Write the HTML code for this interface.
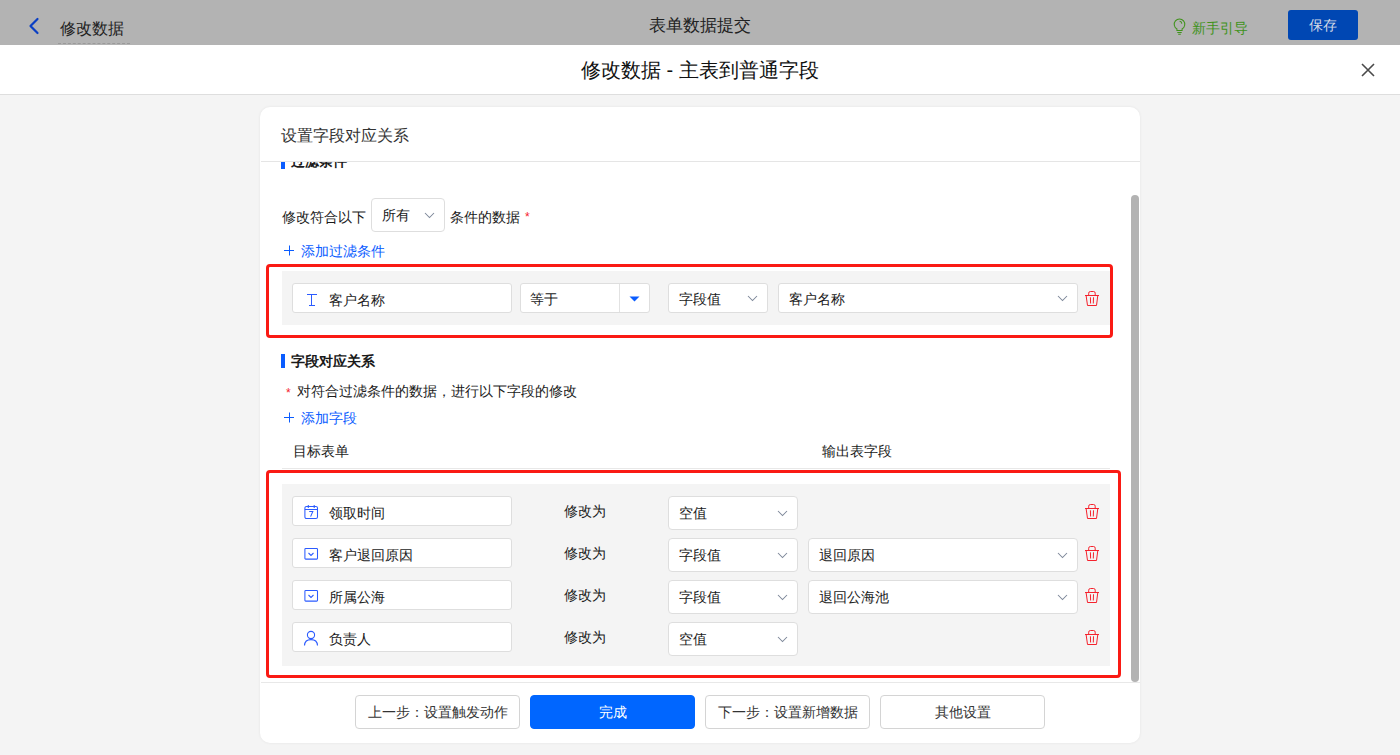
<!DOCTYPE html>
<html><head><meta charset="utf-8">
<style>
*{box-sizing:border-box;margin:0;padding:0}
html,body{width:1400px;height:755px;overflow:hidden;background:#f4f4f4;font-family:"Liberation Sans",sans-serif;color:#1a1a1a;font-size:14px}
.a{position:absolute;white-space:nowrap}
.inp{position:absolute;background:#fff;border:1px solid #dedede;border-radius:3px;height:30px}
.sel{position:absolute;background:#fff;border:1px solid #dedede;border-radius:4px;height:34px}
.txt{position:absolute;white-space:nowrap;line-height:16px;font-size:14px;color:#1a1a1a}
.red{position:absolute;border:3px solid #fa1a14;border-radius:4px}
.gray{position:absolute;background:#f4f4f4}
.btn{position:absolute;height:34px;width:165px;border:1px solid #d4d4d4;border-radius:4px;background:#fff;text-align:center;line-height:32px;font-size:14px;color:#333;white-space:nowrap}
.bar{position:absolute;width:4px;background:#0a5cff}
</style></head><body>
<div class="a" style="left:0;top:0;width:1400px;height:45px;background:#b3b3b3"></div>
<svg class="a" style="left:27px;top:17px" width="14" height="18" viewBox="0 0 14 18"><path d="M10.5 2 L3.5 9 L10.5 16" fill="none" stroke="#0a3fc4" stroke-width="2.2" stroke-linecap="round" stroke-linejoin="round"/></svg>
<div class="txt" style="left:60px;top:20px;font-size:16px;line-height:18px;color:#222">修改数据</div>
<div class="a" style="left:58px;top:43px;width:72px;height:1px;border-top:1px dashed #9a9a9a"></div>
<div class="txt" style="left:649px;top:16px;font-size:17px;line-height:19px;color:#222">表单数据提交</div>
<svg class="a" style="left:1173px;top:18px" width="13" height="17" viewBox="0 0 13 17"><path d="M3.9 12.5V10.9A5.3 5.3 0 1 1 9.1 10.9V12.5H3.9Z M4.3 14.5H8.7 M5.2 16.3H7.8 M6.6 3.3A2.6 2.6 0 0 1 8.8 5.6" fill="none" stroke="#3f921a" stroke-width="1.05"/></svg>
<div class="txt" style="left:1192px;top:19.5px;color:#3f921a">新手引导</div>
<div class="a" style="left:1288px;top:10px;width:70px;height:30px;background:#0047b3;border-radius:3px;color:#d4dae6;text-align:center;line-height:30px;font-size:14px">保存</div>
<div class="a" style="left:0;top:45px;width:1400px;height:50px;background:#fff;border-bottom:1px solid #dedede"></div>
<div class="txt" style="left:581px;top:59px;font-size:20px;line-height:22px;color:#111">修改数据 - 主表到普通字段</div>
<svg class="a" style="left:1360px;top:62px" width="16" height="16" viewBox="0 0 16 16"><path d="M2 2L14 14M14 2L2 14" stroke="#4a4a4a" stroke-width="1.6"/></svg>
<div class="a" style="left:260px;top:107px;width:880px;height:636px;background:#fff;border-radius:10px;box-shadow:0 0 3px rgba(0,0,0,0.07)"></div>
<div class="txt" style="left:281px;top:127px;font-size:16px;line-height:18px;color:#333">设置字段对应关系</div>
<div class="a" style="left:261px;top:161px;width:879px;height:1px;background:#e5e5e5"></div>
<div class="a" style="left:260px;top:162px;width:880px;height:520px;overflow:hidden">
<div style="position:absolute;left:-260px;top:-162px;width:1400px;height:755px">
<div class="bar" style="left:281px;top:155px;height:14px"></div>
<div class="txt" style="left:291px;top:153px;font-weight:bold">过滤条件</div>
<div class="txt" style="left:282px;top:209px">修改符合以下</div>
<div class="sel" style="left:371px;top:198px;width:74px;height:34px"></div>
<div class="txt" style="left:382px;top:207px">所有</div>
<svg class="a" style="left:424px;top:212px" width="11" height="7" viewBox="0 0 11 7"><path d="M1 1L5.5 5.5L10 1" fill="none" stroke="#7d8799" stroke-width="1.05"/></svg>
<div class="txt" style="left:450px;top:209px">条件的数据</div>
<div class="txt" style="left:525px;top:209px;color:#f5222d;font-size:12px">*</div>
<svg class="a" style="left:284px;top:245px" width="11" height="11" viewBox="0 0 11 11"><path d="M0 5.5H10M5.5 0.5V10.5" fill="none" stroke="#0a5cff" stroke-width="1"/></svg>
<div class="txt" style="left:301px;top:243px;color:#0a5cff">添加过滤条件</div>
<div class="red" style="left:266px;top:264px;width:847px;height:74px"></div>
<div class="gray" style="left:282px;top:271px;width:828px;height:54px"></div>
<div class="inp" style="left:292px;top:283px;width:220px"></div>
<svg class="a" style="left:305px;top:292px" width="14" height="16" viewBox="0 0 14 16"><path d="M2 2.5H12M6.5 2.5V13M4 13.5H10" fill="none" stroke="#2b5bff" stroke-width="1"/></svg>
<div class="txt" style="left:329px;top:292px">客户名称</div>
<div class="inp" style="left:520px;top:283px;width:130px"></div>
<div class="a" style="left:619px;top:284px;width:1px;height:28px;background:#e2e2e2"></div>
<svg class="a" style="left:629px;top:296px" width="11" height="6" viewBox="0 0 11 6"><path d="M0.5 0.5H10.5L5.5 5.5Z" fill="#0a5cff"/></svg>
<div class="txt" style="left:530px;top:291px">等于</div>
<div class="inp" style="left:668px;top:283px;width:100px"></div>
<div class="txt" style="left:679px;top:291px">字段值</div>
<svg class="a" style="left:747px;top:295px" width="11" height="7" viewBox="0 0 11 7"><path d="M1 1L5.5 5.5L10 1" fill="none" stroke="#7d8799" stroke-width="1.05"/></svg>
<div class="inp" style="left:778px;top:283px;width:300px"></div>
<div class="txt" style="left:789px;top:291px">客户名称</div>
<svg class="a" style="left:1057px;top:295px" width="11" height="7" viewBox="0 0 11 7"><path d="M1 1L5.5 5.5L10 1" fill="none" stroke="#7d8799" stroke-width="1.05"/></svg>
<svg class="a" style="left:1085px;top:291px" width="15" height="16" viewBox="0 0 15 16"><path d="M0 4.5H14M3.7 4.5V2.2Q3.7 0.5 5.4 0.5H8.6Q10.2 0.5 10.2 2.2V4.5M1.1 4.5L2.5 14.5H11.5L12.8 4.5M5.4 6.3L5.6 12.5M8.5 6.3L8.3 12.5" fill="none" stroke="#f5222d" stroke-width="1"/></svg>
<div class="bar" style="left:281px;top:354px;height:14px"></div>
<div class="txt" style="left:291px;top:353px;font-weight:bold">字段对应关系</div>
<div class="txt" style="left:286px;top:385px;color:#f5222d;font-size:12px">*</div>
<div class="txt" style="left:297px;top:383px">对符合过滤条件的数据，进行以下字段的修改</div>
<svg class="a" style="left:284px;top:412px" width="11" height="11" viewBox="0 0 11 11"><path d="M0 5.5H10M5.5 0.5V10.5" fill="none" stroke="#0a5cff" stroke-width="1"/></svg>
<div class="txt" style="left:301px;top:410px;color:#0a5cff">添加字段</div>
<div class="txt" style="left:293px;top:443px">目标表单</div>
<div class="txt" style="left:822px;top:443px">输出表字段</div>
<div class="a" style="left:282px;top:468px;width:828px;height:1px;background:#e8e8e8"></div>
<div class="red" style="left:266px;top:470px;width:855px;height:208px"></div>
<div class="gray" style="left:282px;top:484px;width:828px;height:182px"></div>

<div class="inp" style="left:292px;top:496px;width:220px"></div>
<svg class="a" style="left:303px;top:504px" width="17" height="16" viewBox="0 0 17 16"><rect x="1.9" y="2.5" width="12.6" height="12" rx="1.6" fill="none" stroke="#2b5bff" stroke-width="1.05"/><path d="M1.9 5.5H14.5M5.3 1V4M11.2 1V4M6.2 7.4H9.8L7.6 12.6" fill="none" stroke="#2b5bff" stroke-width="1.05"/></svg>
<div class="txt" style="left:329px;top:505px">领取时间</div>
<div class="txt" style="left:564px;top:503px">修改为</div>
<div class="sel" style="left:668px;top:496px;width:130px"></div>
<div class="txt" style="left:679px;top:505px">空值</div>
<svg class="a" style="left:777px;top:510px" width="11" height="7" viewBox="0 0 11 7"><path d="M1 1L5.5 5.5L10 1" fill="none" stroke="#7d8799" stroke-width="1.05"/></svg>
<svg class="a" style="left:1085px;top:504px" width="15" height="16" viewBox="0 0 15 16"><path d="M0 4.5H14M3.7 4.5V2.2Q3.7 0.5 5.4 0.5H8.6Q10.2 0.5 10.2 2.2V4.5M1.1 4.5L2.5 14.5H11.5L12.8 4.5M5.4 6.3L5.6 12.5M8.5 6.3L8.3 12.5" fill="none" stroke="#f5222d" stroke-width="1"/></svg>
<div class="inp" style="left:292px;top:538px;width:220px"></div>
<svg class="a" style="left:303px;top:546px" width="17" height="16" viewBox="0 0 17 16"><rect x="1.9" y="2.5" width="12.6" height="10.6" rx="0.8" fill="none" stroke="#2b5bff" stroke-width="1.05"/><path d="M5.5 7L8 9.4L10.5 7" fill="none" stroke="#2b5bff" stroke-width="1.05"/></svg>
<div class="txt" style="left:329px;top:547px">客户退回原因</div>
<div class="txt" style="left:564px;top:545px">修改为</div>
<div class="sel" style="left:668px;top:538px;width:130px"></div>
<div class="txt" style="left:679px;top:547px">字段值</div>
<svg class="a" style="left:777px;top:552px" width="11" height="7" viewBox="0 0 11 7"><path d="M1 1L5.5 5.5L10 1" fill="none" stroke="#7d8799" stroke-width="1.05"/></svg>
<div class="sel" style="left:808px;top:538px;width:270px"></div>
<div class="txt" style="left:819px;top:547px">退回原因</div>
<svg class="a" style="left:1057px;top:552px" width="11" height="7" viewBox="0 0 11 7"><path d="M1 1L5.5 5.5L10 1" fill="none" stroke="#7d8799" stroke-width="1.05"/></svg>
<svg class="a" style="left:1085px;top:546px" width="15" height="16" viewBox="0 0 15 16"><path d="M0 4.5H14M3.7 4.5V2.2Q3.7 0.5 5.4 0.5H8.6Q10.2 0.5 10.2 2.2V4.5M1.1 4.5L2.5 14.5H11.5L12.8 4.5M5.4 6.3L5.6 12.5M8.5 6.3L8.3 12.5" fill="none" stroke="#f5222d" stroke-width="1"/></svg>
<div class="inp" style="left:292px;top:580px;width:220px"></div>
<svg class="a" style="left:303px;top:588px" width="17" height="16" viewBox="0 0 17 16"><rect x="1.9" y="2.5" width="12.6" height="10.6" rx="0.8" fill="none" stroke="#2b5bff" stroke-width="1.05"/><path d="M5.5 7L8 9.4L10.5 7" fill="none" stroke="#2b5bff" stroke-width="1.05"/></svg>
<div class="txt" style="left:329px;top:589px">所属公海</div>
<div class="txt" style="left:564px;top:587px">修改为</div>
<div class="sel" style="left:668px;top:580px;width:130px"></div>
<div class="txt" style="left:679px;top:589px">字段值</div>
<svg class="a" style="left:777px;top:594px" width="11" height="7" viewBox="0 0 11 7"><path d="M1 1L5.5 5.5L10 1" fill="none" stroke="#7d8799" stroke-width="1.05"/></svg>
<div class="sel" style="left:808px;top:580px;width:270px"></div>
<div class="txt" style="left:819px;top:589px">退回公海池</div>
<svg class="a" style="left:1057px;top:594px" width="11" height="7" viewBox="0 0 11 7"><path d="M1 1L5.5 5.5L10 1" fill="none" stroke="#7d8799" stroke-width="1.05"/></svg>
<svg class="a" style="left:1085px;top:588px" width="15" height="16" viewBox="0 0 15 16"><path d="M0 4.5H14M3.7 4.5V2.2Q3.7 0.5 5.4 0.5H8.6Q10.2 0.5 10.2 2.2V4.5M1.1 4.5L2.5 14.5H11.5L12.8 4.5M5.4 6.3L5.6 12.5M8.5 6.3L8.3 12.5" fill="none" stroke="#f5222d" stroke-width="1"/></svg>
<div class="inp" style="left:292px;top:622px;width:220px"></div>
<svg class="a" style="left:303px;top:630px" width="16" height="16" viewBox="0 0 16 16"><circle cx="8" cy="5" r="3.6" fill="none" stroke="#2b5bff" stroke-width="1.1"/><path d="M1.5 15.5Q1.8 9.6 8 9.6Q14.2 9.6 14.5 15.5" fill="none" stroke="#2b5bff" stroke-width="1.1"/></svg>
<div class="txt" style="left:329px;top:631px">负责人</div>
<div class="txt" style="left:564px;top:629px">修改为</div>
<div class="sel" style="left:668px;top:622px;width:130px"></div>
<div class="txt" style="left:679px;top:631px">空值</div>
<svg class="a" style="left:777px;top:636px" width="11" height="7" viewBox="0 0 11 7"><path d="M1 1L5.5 5.5L10 1" fill="none" stroke="#7d8799" stroke-width="1.05"/></svg>
<svg class="a" style="left:1085px;top:630px" width="15" height="16" viewBox="0 0 15 16"><path d="M0 4.5H14M3.7 4.5V2.2Q3.7 0.5 5.4 0.5H8.6Q10.2 0.5 10.2 2.2V4.5M1.1 4.5L2.5 14.5H11.5L12.8 4.5M5.4 6.3L5.6 12.5M8.5 6.3L8.3 12.5" fill="none" stroke="#f5222d" stroke-width="1"/></svg>
</div></div>
<div class="a" style="left:1131px;top:195px;width:8px;height:487px;background:#b3b3b3;border-radius:4px"></div>
<div class="a" style="left:261px;top:682px;width:879px;height:1px;background:#e8e8e8"></div>
<div class="btn" style="left:355px;top:695px">上一步：设置触发动作</div>
<div class="btn" style="left:530px;top:695px;background:#0066ff;border-color:#0066ff;color:#fff">完成</div>
<div class="btn" style="left:705px;top:695px">下一步：设置新增数据</div>
<div class="btn" style="left:880px;top:695px">其他设置</div>
</body></html>
